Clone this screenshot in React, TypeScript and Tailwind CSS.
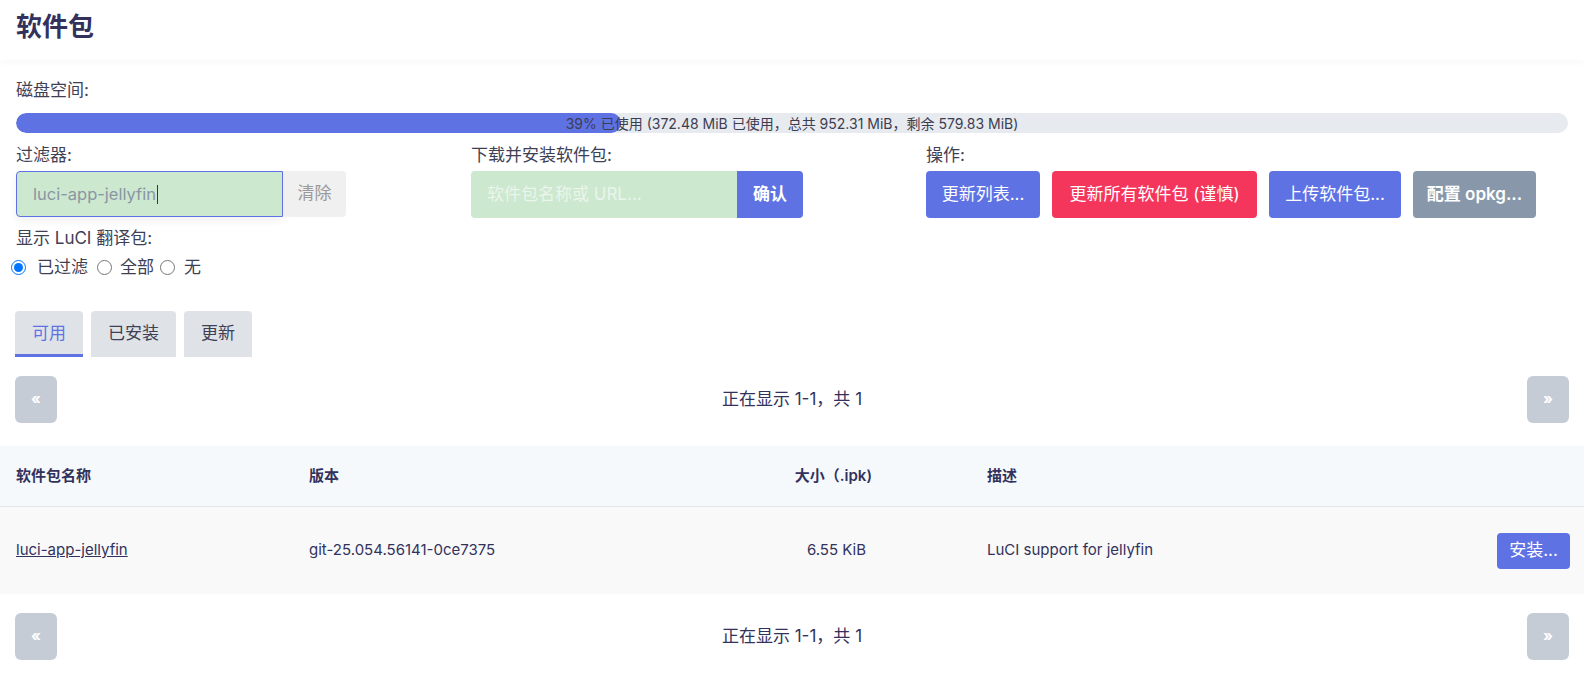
import React from "react";

const font = {
  fontFamily: '"Inter", "Noto Sans CJK SC", "Noto Sans", sans-serif',
};

function Pager() {
  return (
    <div className="flex items-center justify-between px-[15px]">
      <button className="w-[42px] h-[47px] rounded-md bg-[#c5ccd6] text-white text-[15px] font-bold">
        «
      </button>
      <div className="text-[17px] text-[#32325d]">正在显示 1-1，共 1</div>
      <button className="w-[42px] h-[47px] rounded-md bg-[#c5ccd6] text-white text-[15px] font-bold">
        »
      </button>
    </div>
  );
}

export default function App() {
  return (
    <div className="min-h-screen bg-white text-[#32325d]" style={font}>
      {/* page title */}
      <div className="h-[60px] flex items-center px-4 bg-white shadow-[0_4px_6px_rgba(0,0,0,0.025)] relative">
        <h2 className="text-[26px] font-bold text-[#32325d] leading-none mt-[-6px]">软件包</h2>
      </div>

      <div className="pt-[18px]">
        {/* disk usage */}
        <div className="px-4">
          <div className="text-[17px] leading-[24px] text-[#404055]">磁盘空间:</div>
          <div className="relative mt-[11px] h-[20px] rounded-full bg-[#e7eaee] overflow-hidden">
            <div className="absolute left-0 top-0 h-full w-[39%] rounded-full bg-[#5e72e4]" />
            <div className="absolute inset-0 flex items-center justify-center text-[14px] text-[#3d3d52]">
              39% 已使用 (372.48 MiB 已使用，总共 952.31 MiB，剩余 579.83 MiB)
            </div>
          </div>
        </div>

        {/* filter / download / actions */}
        <div className="flex mt-[10px] pl-4">
          <div className="w-[455px]">
            <div className="text-[17px] leading-[24px] text-[#404055]">过滤器:</div>
            <div className="flex mt-[4px]">
              <div className="w-[267px] h-[46px] flex items-center pl-[16px] rounded-l border border-[#5e72e4] bg-[#cce8cf] shadow-[0_4px_8px_rgba(0,0,0,0.06)] text-[16.5px] text-[#8a96a3]">
                luci-app-jellyfin
                <span className="inline-block w-px h-[19px] bg-[#32325d] ml-px" />
              </div>
              <button className="w-[63px] h-[46px] rounded-r bg-[#f0f0f0] text-[17px] text-[#9a9a9a]">
                清除
              </button>
            </div>
          </div>

          <div className="w-[455px]">
            <div className="text-[17px] leading-[24px] text-[#404055]">下载并安装软件包:</div>
            <div className="flex mt-[4px]">
              <div className="w-[266px] h-[47px] flex items-center pl-[16px] rounded-l bg-[#cce8cf] text-[17px] text-[#eaf5ec]">
                软件包名称或 URL...
              </div>
              <button className="w-[66px] h-[47px] rounded-r bg-[#5e72e4] text-[17px] font-semibold text-white">
                确认
              </button>
            </div>
          </div>

          <div>
            <div className="text-[17px] leading-[24px] text-[#404055]">操作:</div>
            <div className="flex gap-[12px] mt-[4px]">
              <button className="w-[114px] h-[47px] rounded bg-[#5e72e4] text-[17px] text-white">
                更新列表...
              </button>
              <button className="w-[205px] h-[47px] rounded bg-[#f5365c] text-[17px] text-white">
                更新所有软件包 (谨慎)
              </button>
              <button className="w-[132px] h-[47px] rounded bg-[#5e72e4] text-[17px] text-white">
                上传软件包...
              </button>
              <button className="w-[123px] h-[47px] rounded bg-[#8898aa] text-[17px] font-semibold text-white">
                配置 opkg...
              </button>
            </div>
          </div>
        </div>

        {/* translation filter */}
        <div className="px-4 mt-[8px] text-[17px] leading-[24px] text-[#404055]">显示 LuCI 翻译包:</div>
        <div className="flex items-center text-[17px] leading-[24px] text-[#404055] pl-[11px] mt-[5px]">
          <label className="flex items-center">
            <input type="radio" name="lang" defaultChecked className="w-[15px] h-[15px] m-0 accent-[#0075ff]" />
            <span className="ml-[11px]">已过滤</span>
          </label>
          <label className="flex items-center ml-[9px]">
            <input type="radio" name="lang" className="w-[15px] h-[15px] m-0" />
            <span className="ml-[8px]">全部</span>
          </label>
          <label className="flex items-center ml-[6px]">
            <input type="radio" name="lang" className="w-[15px] h-[15px] m-0" />
            <span className="ml-[9px]">无</span>
          </label>
        </div>

        {/* tabs */}
        <div className="flex gap-[8px] px-[15px] mt-[32px]">
          <div className="h-[46px] px-[17px] flex items-center rounded-t bg-[#dfe3e8] text-[17px] text-[#5e72e4] border-b-[3px] border-[#5e72e4] pt-[3px]">
            可用
          </div>
          <div className="h-[46px] px-[17px] flex items-center rounded-t bg-[#dfe3e8] text-[17px] text-[#404055]">
            已安装
          </div>
          <div className="h-[46px] px-[17px] flex items-center rounded-t bg-[#dfe3e8] text-[17px] text-[#404055]">
            更新
          </div>
        </div>

        <div className="mt-[19px]">
          <Pager />
        </div>

        {/* package table */}
        <div className="mt-[23px]">
          <div className="flex items-center h-[61px] bg-[#f6f9fc] border-b border-[#e3e6ea] text-[15px] font-semibold text-[#32325d]">
            <div className="w-[293px] pl-4">软件包名称</div>
            <div className="w-[395px] pl-4">版本</div>
            <div className="w-[283px] text-right pr-[99px]">大小（.ipk)</div>
            <div className="flex-1 pl-4">描述</div>
          </div>
          <div className="flex items-center h-[87px] bg-[#f9f9f9] text-[15px] text-[#32325d]">
            <div className="w-[293px] pl-4">
              <span className="underline">luci-app-jellyfin</span>
            </div>
            <div className="w-[395px] pl-4">git-25.054.56141-0ce7375</div>
            <div className="w-[283px] text-right pr-[105px]">6.55 KiB</div>
            <div className="flex-1 pl-4">LuCI support for jellyfin</div>
            <div className="pr-[14px]">
              <button className="w-[73px] h-[36px] rounded bg-[#5e72e4] text-[17px] text-white">
                安装...
              </button>
            </div>
          </div>
        </div>

        <div className="mt-[19px] pb-[12px]">
          <Pager />
        </div>
      </div>
    </div>
  );
}
